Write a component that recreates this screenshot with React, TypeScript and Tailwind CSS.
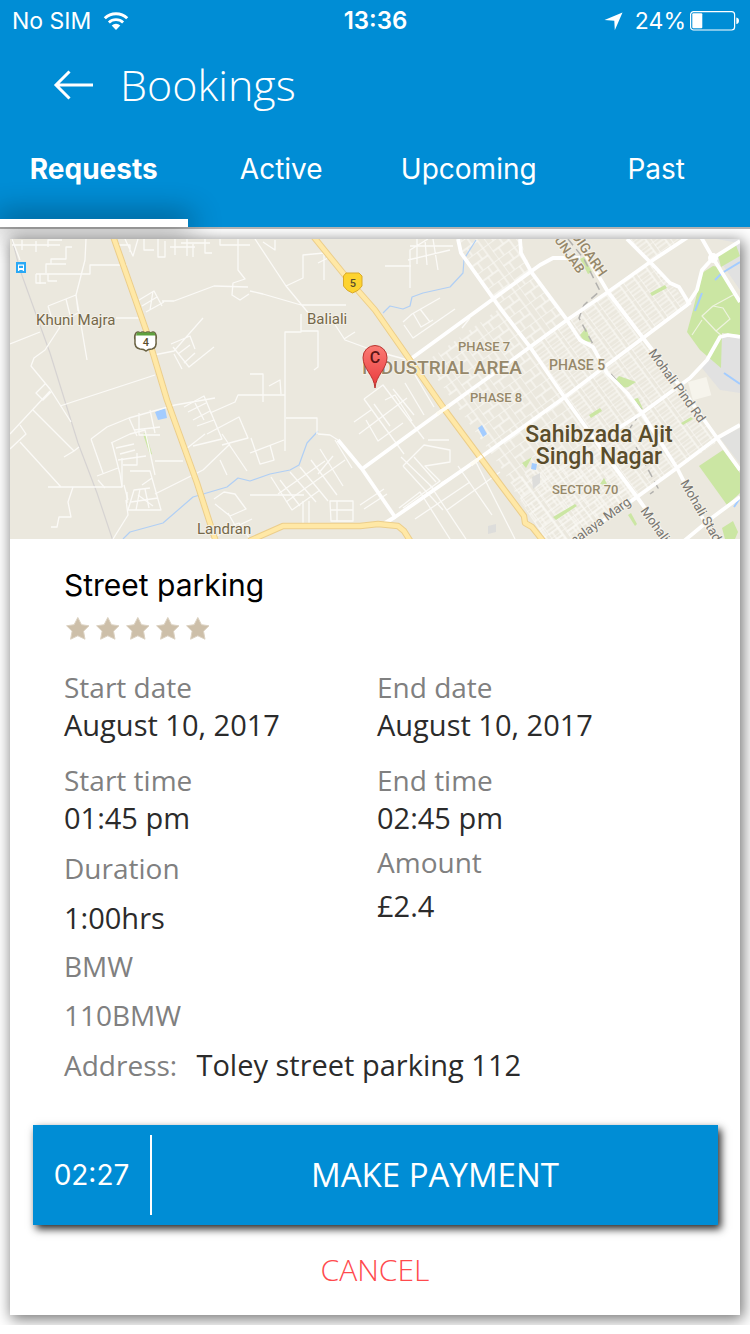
import React from "react";

const HIGHWAYS = [
  "M113 236 L146 330 L167 400 L197 483 L216 542",
  "M313 236 L347 278 L375 310 L410 360 L445 410 L500 484 L524 516 L525 523 L532 527 L544 542",
  "M249 541 L283 526 H360 L378 524 L398 526 L404 531 L411 542",
];

const MAJOR = [
  "M458 239 L461 253 L500 308 L530 347 L565 398 L600 447 L637 497 L667 539",
  "M412 358 L500 294 L540 265 L553 258 H580",
  "M385 523 L395 517 L477 460 L565 397 L603 368 L643 338 L687 305 L697 290 L702 270 L713 258 L740 241",
  "M362 469 L443 410 L500 369 L530 347 L567 320 L608 292 L653 260 L688 237",
  "M338 440 L362 469 L395 517",
  "M520 239 L521 253 L532 273 L567 320 L580 340 L593 347 L607 373 L627 393 L642 413 L677 468 L700 513 L713 539",
  "M583 250 L608 292 L643 338 L680 386 L717 438 L740 470",
  "M627 239 L653 265 L670 283 L679 287 L690 305",
  "M701 237 L713 258 L740 302",
  "M577 539 L637 497 L677 468 L717 438 L740 425",
  "M600 440 L642 413 L690 378 L707 360 L720 337 L728 335 L740 337",
  "M684 541 L713 517 L740 497",
];

const MINOR = [
  "M12 239 L20 260 M12 245 H60 M22 250 V240 M36 252 V241 M48 247 V240 H62",
  "M36 274 H90 V265 H127 M46 273 V264 H66 M51 264 V259 H66 V247 H72 M36 274 V283 H46 M40 274 V284 M48 274 V281 H57",
  "M86 239 L85 260 L76 295 L87 360 M48 306 L76 295 L78 311 M48 306 L52 319 L60 327 M55 325 L78 313 M66 299 L70 315",
  "M10 344 L40 332 M60 327 L45 350 L34 358 L31 366 L50 389 L71 422 M50 391 L10 434 M45 384 L36 393 L43 400 L51 392",
  "M60 406 L155 375 M33 410 L74 451 L64 457 M74 451 L79 447 M10 449 L26 434 L20 425 M20 442 L61 487 M48 487 H122 V458",
  "M73 487 L68 502 L71 517 H59 L57 527 H51",
  "M115 245 H130 V252 M125 239 L133 256 L138 239 M144 239 V250 H154 M158 239 V257 H165 V241 M170 247 H195 M175 239 V255 M181 243 H210 M187 239 V256 M193 244 V257 M205 239 V253 H212 M220 239 V245 H250 M238 239 V270 L245 279 L233 283 L232 295 L240 300 L249 294",
  "M139 300 L154 291 L162 306 M142 306 L157 297 M146 312 L164 302 M153 291 L150 310 M162 301 H174 L214 286 L248 287",
  "M116 318 H140 M154 355 L174 351 L203 318 M171 344 L190 336 L195 349 M173 347 L189 367 L214 347 M178 354 L190 345 M184 363 L195 353 M174 354 L182 369",
  "M91 439 L107 427 L129 418 L175 405 L215 398 M91 439 L103 473 M129 418 L137 436 M139 413 V435 H160 M150 410 L155 433 M134 430 L160 427",
  "M111 443 L130 434 L145 430 L155 475 M112 443 L120 474 L122 487 M120 454 L135 450 M123 465 H137 V453 M97 476 L118 468 M98 480 L105 488 M124 485 L128 500 M130 471 H150 L161 510 H128 L134 490 L150 488 M138 495 L153 506 M152 478 L142 485",
  "M116 448 L134 444 M118 460 L146 456 M127 492 V503 M140 489 L136 510 M131 502 L158 498 M145 489 L149 508 M113 539 L128 515 L126 500",
  "M184 407 L204 396 L222 439 L193 446 M188 412 L206 403 M193 420 L210 411 M197 426 L214 420 M195 403 L204 420 M210 413 L235 402 L238 395 L250 395",
  "M207 434 L239 417 L248 438 L222 445 M222 434 L247 471 M186 449 L205 434 M155 461 H183 M155 494 L203 470 L230 444 M227 475 L220 460",
  "M214 499 L224 492 L235 494 L246 509 L230 516 L215 504 M210 539 L252 519 M218 531 L239 523 L250 539 M228 513 L240 534",
  "M255 239 L286 286 L310 315 M250 291 L263 294 L301 305 H346 M263 242 L275 250 V240 M286 286 L303 278 V255 L324 253 V280 M318 263 L328 258",
  "M301 331 H318 V367 L314 370 M318 434 L330 435 L338 440",
  "M250 374 H263 V402 M250 395 H285 V332 H301 V314 M286 418 H317 V434 M285 365 V451 M250 453 L284 440 M251 438 L260 464 L274 460 L270 445",
  "M269 386 L280 380 L281 394 M332 320 L345 340 L375 351 L408 360 M344 339 L355 332",
  "M385 266 H411 M410 288 V250 L428 239 M417 239 V264 M425 240 L427 265 M433 239 L438 270 M408 260 L450 250 M410 246 H453",
  "M403 322 L412 314 L440 298 M413 313 L421 327 L433 320 M420 309 L430 322 M404 325 L413 338 L455 309 M462 328 L470 318 M481 283 L496 300",
  "M364 399 L383 385 L424 439 M364 399 L404 454 M354 422 L371 410 M359 434 L407 398 M374 404 L390 426 M385 400 L395 395 L412 421 M393 389 L414 415 M405 383 L424 415 M415 375 L434 407 M366 420 L378 441 L403 423",
  "M403 466 L424 445 L450 450 V462 L425 466 L440 481 L403 508 M401 457 L433 488 M403 466 L443 510 M414 457 L436 482 M441 483 L470 466 M428 440 L449 440",
  "M271 477 L292 510 L320 490 M280 480 L300 506 M290 472 L316 502 M300 467 L328 501 M311 460 L337 495 M320 449 L343 486 M335 440 L352 468 M278 494 L325 461 M286 502 L345 460 M318 474 L333 456",
  "M330 501 H353 V521 H331 Z M337 501 V521 M330 510 H353 M303 501 V525 M309 501 V525 M250 495 H304 M360 505 L384 489 M364 509 L387 494",
  "M399 508 L420 492 L450 539 M430 485 L466 539 M458 466 L492 515 M476 462 L515 539 M415 519 L470 482 M447 510 L500 472",
];

const WATER = [
  "M123 539 L130 532 L163 523 L193 497 L227 487 L238 478 L250 481 L270 474 L290 470 L299 465 L307 443 L318 431",
  "M476 240 L464 259 L463 273 L450 287 L423 293 L412 297 L410 306 L403 309 L390 306 L383 313",
];

const GREENS = [
  "702,273 713,266 719,267 740,302 740,335 722,333 721,368 700,350 687,332 693,310",
  "718,255 736,245 740,256 721,267",
  "699,466 723,450 740,473 740,493 727,505",
  "722,528 733,521 738,532 735,539 725,539",
  "580,335 586,328 591,342 584,341",
  "614,382 619,376 636,382 628,387 621,388",
  "634,399 638,398 643,409 640,410",
  "650,293 665,285 667,288 652,296",
  "589,415 600,408 602,411 591,418",
  "522,463 532,457 526,468",
  "600,484 604,478 608,486",
  "553,517 575,504 577,506 556,520",
  "628,515 631,513 637,524 635,526",
  "143,434 146,433 152,454 150,455",
  "580,259 584,257 592,272 588,274",
  "681,423 691,417 693,419 683,425",
];

const BLUES = ["155,412 165,408 167,418 158,420", "478,428 482,425 487,434 483,437", "532,463 537,464 536,470 531,469"];

function StreetMap() {
  const halo = { paintOrder: "stroke" as const, stroke: "#f4f1e8", strokeWidth: 2, strokeLinejoin: "round" as const };
  return (
    <svg
      viewBox="10 239 730 300"
      preserveAspectRatio="xMidYMid slice"
      className="block h-[300px] w-full"
      fontFamily="Roboto, sans-serif"
      role="img"
      aria-label="Map"
    >
      <defs>
        <pattern id="blocks" width="26" height="18" patternUnits="userSpaceOnUse" patternTransform="translate(530 347) rotate(-36)">
          <path d="M0 0 H26 M0 9 H20 M0 0 V18 M20 0 V18 M7 9 V18 M13 0 V9" fill="none" stroke="#fcfbf8" strokeWidth="1.3" />
        </pattern>
        <pattern id="dense" width="16" height="12" patternUnits="userSpaceOnUse" patternTransform="translate(643 338) rotate(-36)">
          <path d="M0 0 H16 M0 4 H12 M0 8 H12 M0 0 V12 M12 0 V12" fill="none" stroke="#fbfaf6" strokeWidth="1.2" />
        </pattern>
        <linearGradient id="pin" x1="0" y1="0" x2="0" y2="1">
          <stop offset="0" stopColor="#fb7b74" />
          <stop offset="1" stopColor="#e8393b" />
        </linearGradient>
      </defs>
      <rect x="10" y="239" width="730" height="300" fill="#ebe8de" />
      <polygon points="461,250 500,308 445,348 425,362 500,466 545,539 577,539 600,523 637,497 567,398 530,347 567,320 532,273 520,239 460,239" fill="url(#blocks)" opacity=".8" />
      <polygon points="530,347 567,320 608,292 685,239 627,239 653,265 690,305 643,338 720,440 637,497 600,447" fill="url(#dense)" />
      <polygon points="530,470 600,447 637,497 577,539 545,539 510,485" fill="url(#dense)" />
      <polygon points="717,239 740,239 740,290 716,255 738,243" fill="#e1e1e1" />
      <polygon points="721,337 740,338 740,393 720,390 702,368" fill="#e1e1e1" />
      <polygon points="720,438 740,428 740,464" fill="#e1e1df" />
      <path d="M532 477 l8 -4 l0 10 l-7 6z M488 526 l8 -2 l0 8 l-8 2z" fill="#dddddb" />
      {GREENS.map((p) => <polygon key={p} points={p} fill="#cbe6a3" />)}
      {BLUES.map((p) => <polygon key={p} points={p} fill="#a3ccff" />)}
      <g fill="none" strokeLinejoin="round">
        <path d="M12 239 L20 270 L50 353 L78 443 L97 493 L113 541" stroke="#d6d3d2" strokeWidth="1.2" />
        {WATER.map((d) => <path key={d} d={d} stroke="#b0cff5" strokeWidth="1.2" />)}
        <path d="M695 311 L702 293 M715 280 L722 273 L740 262 M724 373 L740 384 M734 507 L740 498" stroke="#a3ccff" strokeWidth="2" />
        {MINOR.map((d) => <path key={d} d={d} stroke="#fbfaf7" strokeWidth="1.3" />)}
        <path d="M702 316 L713 306 L723 308 L730 319 L716 331 Z M713 306 L735 294 M692 335 L702 320 M716 331 L722 336" stroke="#eef3df" strokeWidth="1.2" />
        <path d="M568 239 L584 259 L600 291 L584 305 L579 318 L594 346 M611 374 L642 410 L630 428 M636 447 L658 488 L650 494" stroke="#b2b1ae" strokeWidth="1.5" strokeDasharray="8 5" />
        {MAJOR.map((d) => <path key={d} d={d} stroke="#ffffff" strokeWidth="3.8" />)}
        {HIGHWAYS.map((d) => <path key={d} d={d} stroke="#ecce8b" strokeWidth="6.4" />)}
        {HIGHWAYS.map((d) => <path key={d} d={d} stroke="#ffe8a6" strokeWidth="4.4" />)}
        <path d="M437 414 L449 406 M471 465 L482 456" stroke="#fffdf4" strokeWidth="3.4" />
      </g>
      <circle cx="713" cy="258" r="5" fill="#fff" />
      <rect x="690" y="379" width="19" height="19" fill="#f6f4ec" transform="rotate(-15 700 388)" />

      <rect x="16" y="262" width="10" height="11" fill="#2aa9f5" />
      <path d="M18 264.500 h6 v6.500 h-1.300 v-1 h-3.400 v1 h-1.300z M19 265.700 v2.300 h4 v-2.300z" fill="#fff" fillRule="evenodd" />

      <path d="M136 333 q2 -2 4 0 q3 -2 5 0 q3 -2 6 0 q2 -2 4 0 q2 3 1 7 q1 8 -4 9 q-4 0 -6 2 q-2 -2 -6 -2 q-6 -1 -5 -9 q-1 -4 1 -7z" fill="#fff" stroke="#6a6243" strokeWidth="1.5" />
      <path d="M137 332.500 h17.500 l1 3 h-19.500z" fill="#5fa13e" />
      <path d="M346 273 h13 l3 3 v10 q-3 5 -9.500 7 q-6 -2 -9 -7 v-10z" fill="#fdd32f" stroke="#d9a92a" strokeWidth="1" />

      <g fontWeight="500" fill="#5b4f2c" textAnchor="middle" fontSize="11">
        <text x="146" y="346">4</text>
        <text x="353" y="287">5</text>
      </g>
      <g fill="#74684a" fontSize="15" {...halo}>
        <text x="36" y="325">Khuni Majra</text>
        <text x="307" y="324">Baliali</text>
        <text x="197" y="534">Landran</text>
      </g>
      <g fill="#96886a" fontSize="13" fontWeight="500" {...halo}>
        <text x="458" y="351">PHASE 7</text>
        <text x="549" y="370" fontSize="14">PHASE 5</text>
        <text x="470" y="402">PHASE 8</text>
        <text x="552" y="494">SECTOR 70</text>
        <text x="362" y="374" fontSize="19">INDUSTRIAL AREA</text>
        <text transform="translate(554 240) rotate(55)">UNJAB</text>
        <text transform="translate(571 236) rotate(55)" fontSize="14">DIGARH</text>
      </g>
      <g fill="#5a4d2b" textAnchor="middle" fontSize="23" fontWeight="500" {...halo}>
        <text x="599" y="442">Sahibzada Ajit</text>
        <text x="599" y="464">Singh Nagar</text>
      </g>
      <g fill="#777570" fontSize="13" {...halo}>
        <text transform="translate(648 353) rotate(54)">Mohali Pind Rd</text>
        <text transform="translate(680 483) rotate(60)">Mohali Stadium</text>
        <text transform="translate(640 511) rotate(54)">Mohali Rd</text>
        <text transform="translate(561 555) rotate(-36)">Himalaya Marg</text>
      </g>
      <path d="M375 388 C374 375 363 369 363 357.500 A12 12 0 0 1 387 357.500 C387 369 376 375 375 388Z" fill="url(#pin)" stroke="#b9342f" strokeWidth="1" />
      <text x="375" y="363" fontSize="16" fontWeight="500" fill="#5c1414" textAnchor="middle">C</text>
    </svg>
  );
}

function StatusBar() {
  return (
    <div className="grid h-[42px] grid-cols-3 items-center pr-[11px] pl-3 text-[23px] leading-10">
      <div className="flex items-center gap-3">
        <span>No SIM</span>
        <svg width="26" height="20" viewBox="0 0 26 20" fill="none" stroke="#fff" aria-hidden="true">
          <path d="M1.800 7.300 a16 16 0 0 1 22.400 0" strokeWidth="3" />
          <path d="M5.900 11.500 a10.200 10.200 0 0 1 14.200 0" strokeWidth="2.800" />
          <path d="M13 19 l-4.300 -4.400 a6.200 6.200 0 0 1 8.600 0z" fill="#fff" stroke="none" />
        </svg>
      </div>
      <span className="text-center text-[24px] font-semibold">13:36</span>
      <div className="flex items-center justify-end">
        <svg className="mr-3" width="19" height="19" viewBox="0 0 19 19" fill="#fff" aria-hidden="true">
          <path d="M18.500 0.500 L10.800 18.300 L10.300 8.800 L0.500 8z" />
        </svg>
        <span className="mr-1">24%</span>
        <svg width="49" height="20" viewBox="0 0 49 20" aria-hidden="true">
          <rect x=".6" y=".6" width="44" height="18.400" rx="3" fill="none" stroke="#fff" strokeWidth="1.200" />
          <rect x="2.300" y="2.300" width="10" height="15" rx="1" fill="#fff" />
          <path d="M46.300 6.500 q2.700 .5 2.700 3.300 q0 2.800 -2.700 3.300z" fill="#fff" />
        </svg>
      </div>
    </div>
  );
}

const TABS = ["Requests", "Active", "Upcoming", "Past"];

function Pair({ label, value, row }: { label: string; value: string; row: string }) {
  return (
    <div className={row}>
      <dt className="text-[#808080]">{label}</dt>
      <dd className="text-[29px] text-[#2b2b2b]">{value}</dd>
    </div>
  );
}

export default function App() {
  return (
    <div className="min-h-screen bg-white pb-[10px] font-['Open_Sans',sans-serif]">
      <header className="border-b-2 border-[#b4b4b4] bg-[#008dd5] text-white">
        <div className="font-[Inter,sans-serif]">
          <StatusBar />
        </div>
        <div className="flex h-[86px] items-center gap-[26px] pl-[53px]">
          <button type="button" aria-label="Back">
            <svg className="block" width="41" height="30" viewBox="0 0 41 30" fill="none" stroke="#fff" strokeWidth="3" aria-hidden="true">
              <path d="M16.500 1.500 L3 15 L16.500 28.500 M3 15 H40" />
            </svg>
          </button>
          <h1 className="text-[43px] leading-[56px] font-light">Bookings</h1>
        </div>
        <nav className="grid grid-cols-4 font-[Inter,sans-serif] text-[28px]">
          {TABS.map((tab, i) => (
            <button
              key={tab}
              type="button"
              className={
                i === 0
                  ? "flex flex-col pt-4 font-bold"
                  : "flex flex-col pt-4"
              }
            >
              <span className="w-full pb-[25px] text-center leading-[50px]">{tab}</span>
              {i === 0 && <span className="h-2 w-full bg-white shadow-[0_0_30px_4px_rgba(0,0,0,0.45)]" />}
            </button>
          ))}
        </nav>
      </header>

      <div className="overflow-x-clip overflow-y-hidden px-[10px] pt-[10px] pb-[10px]">
        <main className="bg-white pb-5 shadow-[2px_3px_14px_1px_rgba(0,0,0,0.55)]">
          <StreetMap />
          <section className="pt-6 pl-[54px]">
            <h2 className="font-[Inter,sans-serif] text-[30px] leading-[44px] text-black">Street parking</h2>
            <div className="mt-2 flex gap-1 pb-[27px]" role="img" aria-label="Rating">
              {[0, 1, 2, 3, 4].map((n) => (
                <svg key={n} width="26" height="26" viewBox="0 0 26 26" fill="#cdbfa9" stroke="#dcd2c2" strokeWidth="1" aria-hidden="true">
                  <path d="M13.800 2.500 L17.500 9.700 L25 10.800 L19.500 16.200 L21 24.200 L13.800 20.800 L6.600 24.200 L8.100 16.200 L2.600 10.800 L10.100 9.700z" />
                </svg>
              ))}
            </div>
            <div className="grid grid-cols-[313px_1fr] text-[28px]">
              <dl>
                <Pair label="Start date" value="August 10, 2017" row="mb-[17px] leading-[38px]" />
                <Pair label="Start time" value="01:45 pm" row="mb-[7px] leading-[38px]" />
                <Pair label="Duration" value="1:00hrs" row="leading-[49px]" />
              </dl>
              <dl>
                <Pair label="End date" value="August 10, 2017" row="mb-[17px] leading-[38px]" />
                <Pair label="End time" value="02:45 pm" row="mb-[3px] leading-[38px]" />
                <Pair label="Amount" value="£2.4" row="leading-[44px]" />
              </dl>
            </div>
            <div className="text-[28px] leading-[49px] text-[#808080]">
              <p>BMW</p>
              <p>110BMW</p>
              <p>
                Address: <span className="ml-3 text-[29px] text-[#2b2b2b]">Toley street parking 112</span>
              </p>
            </div>
          </section>
          <div className="mt-[35px] mr-[22px] ml-[23px]">
            <button
              type="button"
              className="flex h-[100px] w-full items-center bg-[#008dd5] text-white shadow-[3px_4px_8px_0px_rgba(0,0,0,0.85)]"
            >
              <span className="flex h-20 w-[119px] items-center justify-center border-r-2 border-white font-[Inter,sans-serif] text-[28px]">
                02:27
              </span>
              <span className="flex-1 text-[33px]">MAKE PAYMENT</span>
            </button>
          </div>
          <div className="mt-5 flex justify-center">
            <button type="button" className="text-[30px] leading-[50px] font-light text-[#ff4a4d]">CANCEL</button>
          </div>
        </main>
      </div>
    </div>
  );
}
